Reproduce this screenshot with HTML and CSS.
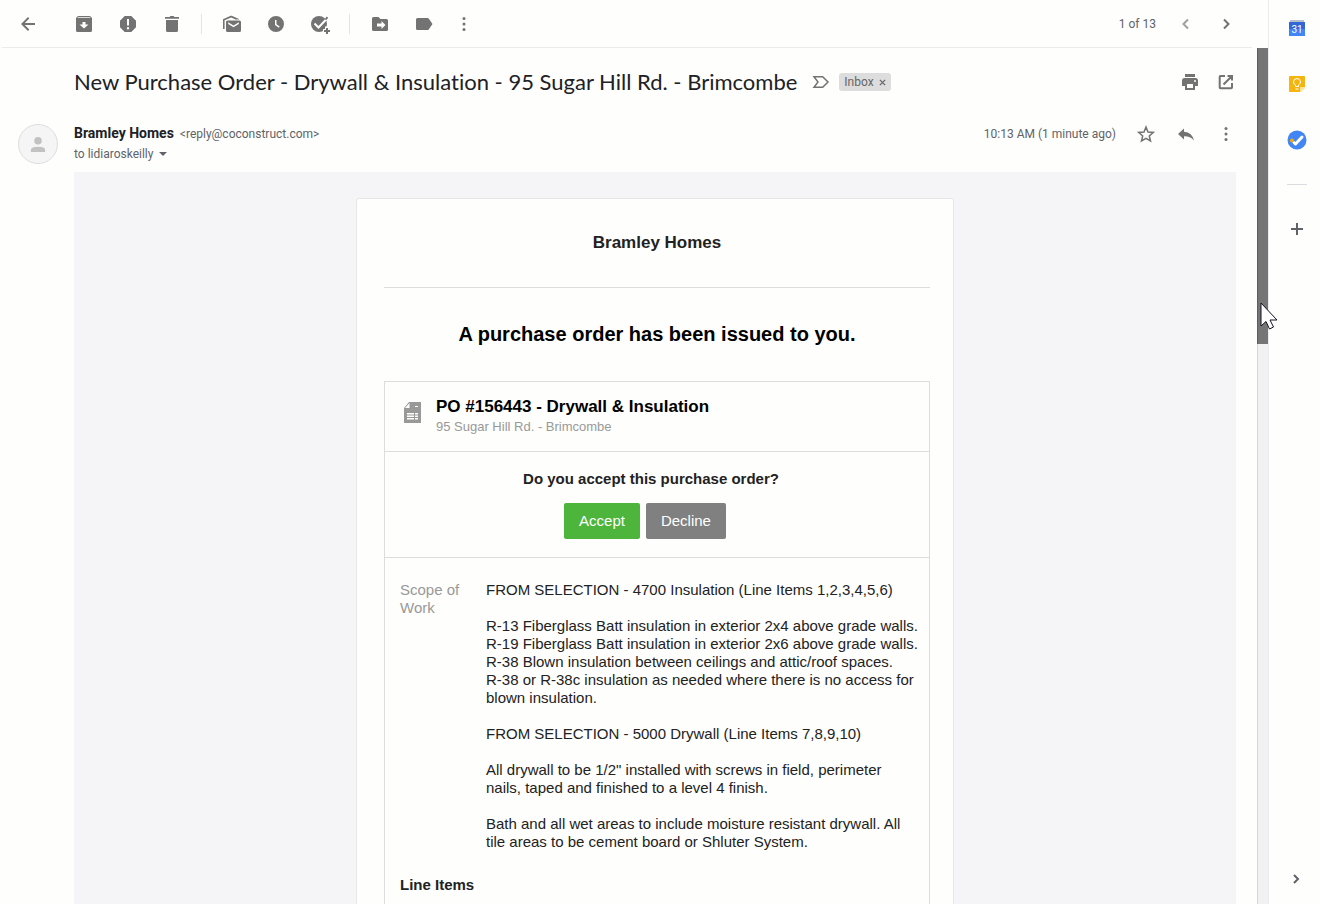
FILE: index.html
```html
<!DOCTYPE html>
<html lang="en">

<head>
    <meta charset="UTF-8">
    <meta name="viewport" content="width=device-width, initial-scale=1.0">
    <title>New Purchase Order - Drywall &amp; Insulation</title>
    <link rel="stylesheet" href="styles.css">
</head>

<body>
    <main class="mail">
        <div class="toolbar">
            <button class="icon-btn back" aria-label="Back to Inbox">
                <svg viewBox="0 0 20 20"><path d="M17 9H6.800l4.500-4.600L10 3l-7 7 7 7 1.300-1.400L6.800 11H17z"/></svg>
            </button>
            <div class="group">
                <button class="icon-btn" aria-label="Archive">
                    <svg viewBox="0 0 20 20"><path fill-rule="evenodd" d="M4 2h12l2 2v12.500q0 1.500-1.500 1.500h-13Q2 18 2 16.500V4zM4 3.200 3.500 4h13l-.5-.8zM8.500 8v2.500H5.500L10 14.500l4.500-4H11.500V8z"/></svg>
                </button>
                <button class="icon-btn" aria-label="Report spam">
                    <svg viewBox="0 0 20 20"><path fill-rule="evenodd" d="M6.700 2h6.600L18 6.700v6.600L13.300 18H6.700L2 13.300V6.700zM9 5v6.500h2V5zM10 13a1.200 1.200 0 1 0 0 2.400 1.200 1.200 0 0 0 0-2.400z"/></svg>
                </button>
                <button class="icon-btn" aria-label="Delete">
                    <svg viewBox="0 0 20 20"><path d="M4 6h12v10.500q0 1.500-1.500 1.500h-9Q4 18 4 16.500zM3 3h4.500l1-1h3l1 1H17v1.700H3z"/></svg>
                </button>
            </div>
            <div class="group">
                <button class="icon-btn" aria-label="Mark as unread">
                    <svg viewBox="0 0 20 20"><path fill-rule="evenodd" d="M5.500 6.500h12q1.500 0 1.500 1.500v8.500q0 1.500-1.500 1.500h-12Q4 18 4 16.500V8Q4 6.500 5.500 6.500zM6.200 8.300v1.600l5.300 3.300 5.300-3.300V8.300l-5.300 3.300z"/><path d="M1 15V5.200L8.700 1.800h1L17 5v.5h-3.500L9.200 3.400 2.600 6.300V15z"/></svg>
                </button>
                <button class="icon-btn" aria-label="Snooze">
                    <svg viewBox="0 0 20 20"><path fill-rule="evenodd" d="M10 2a8 8 0 1 0 0 16 8 8 0 0 0 0-16zM9 6h1.500v4.200l3.200 2.300-.9 1.200L9 11z"/></svg>
                </button>
                <button class="icon-btn" aria-label="Add to Tasks">
                    <svg viewBox="0 0 20 20"><circle cx="9" cy="10" r="8"/><path class="cut" d="m4.500 9.500 4 4L18.500 3"/><path d="m16.800 2.500 1.400 1.200-2 2.500-1.400-1.300z"/><path class="halo" d="M17 12.500v8M13 17h8"/><path class="line" d="M17 14v6M14 17h6"/></svg>
                </button>
            </div>
            <div class="group last">
                <button class="icon-btn" aria-label="Move to">
                    <svg viewBox="0 0 20 20"><path fill-rule="evenodd" d="M3.500 3h5l2 2h6Q18 5 18 6.500v9q0 1.500-1.500 1.500h-13Q2 17 2 15.500v-11Q2 3 3.500 3zM7 9.500v3h4.500V15l4-4-4-4v2.500z"/></svg>
                </button>
                <button class="icon-btn" aria-label="Labels">
                    <svg viewBox="0 0 20 20"><path d="M3.500 4h10q.8 0 1.200.6L18.500 10l-3.800 5.400q-.4.6-1.200.6h-10Q2 16 2 14.500v-9Q2 4 3.500 4z"/></svg>
                </button>
                <button class="icon-btn" aria-label="More">
                    <svg viewBox="0 0 20 20"><circle cx="10" cy="4.500" r="1.500"/><circle cx="10" cy="10" r="1.500"/><circle cx="10" cy="15.500" r="1.500"/></svg>
                </button>
            </div>
            <div class="pager">
                <span class="count">1 of 13</span>
                <button class="icon-btn faded" aria-label="Newer">
                    <svg viewBox="0 0 20 20"><path class="line" d="M12 5.500 7.500 10l4.500 4.500"/></svg>
                </button>
                <button class="icon-btn" aria-label="Older">
                    <svg viewBox="0 0 20 20"><path class="line" d="m8 5.500 4.500 4.500L8 14.500"/></svg>
                </button>
            </div>
        </div>

        <div class="scroll-area">
            <div class="thread">
                <div class="subject">
                    <h2>New Purchase Order - Drywall &amp; Insulation - 95 Sugar Hill Rd. - Brimcombe</h2>
                    <button class="icon-btn important" aria-label="Mark as important">
                        <svg viewBox="0 0 20 20"><path class="outline" d="M3 4.700h8.700l5.300 5.300-5.300 5.300H3L7 10z"/></svg>
                    </button>
                    <span class="label">Inbox <button aria-label="Remove label Inbox"><svg viewBox="0 0 8 8"><path class="outline" d="m1 1 6 6M7 1 1 7"/></svg></button></span>
                    <div class="actions">
                        <button class="icon-btn" aria-label="Print all">
                            <svg viewBox="0 0 20 20"><path d="M5 2h10v3H5z"/><path fill-rule="evenodd" d="M4.500 6h11Q18 6 18 8.500V14h-3v4H5v-4H2V8.500Q2 6 4.500 6zM7 12v4h6v-4zM15 8a1 1 0 1 0 0 2 1 1 0 0 0 0-2z"/></svg>
                        </button>
                        <button class="icon-btn" aria-label="In new window">
                            <svg viewBox="0 0 20 20"><path class="line" d="M9 4H4.500q-.8 0-.8.8v10.700q0 .8.8.8h10.700q.8 0 .8-.8V11M11.500 4H16v4.500M16 4l-8.500 8.500"/></svg>
                        </button>
                    </div>
                </div>

                <div class="message">
                    <div class="avatar">
                        <svg viewBox="0 0 40 40"><circle cx="20" cy="16.500" r="4"/><path d="M12.500 28.500v-2q0-3.500 7.500-3.500t7.500 3.500v2z"/></svg>
                    </div>
                    <div class="message-main">
                        <div class="message-head">
                            <div class="from">
                                <div class="sender"><strong>Bramley Homes</strong> <span>&lt;reply@coconstruct.com&gt;</span></div>
                                <div class="to">to lidiaroskeilly <button aria-label="Show details"><svg viewBox="0 0 8 4"><path d="M0 0h8L4 4z"/></svg></button></div>
                            </div>
                            <div class="meta">
                                <span class="date">10:13 AM (1 minute ago)</span>
                                <button class="icon-btn" aria-label="Star">
                                    <svg viewBox="0 0 20 20"><path class="outline" d="m10 3 2 5 5.300.4-4 3.500 1.200 5.100L10 14.300 5.500 17l1.200-5.100-4-3.500L8 8z"/></svg>
                                </button>
                                <button class="icon-btn" aria-label="Reply">
                                    <svg viewBox="0 0 20 20"><path d="M8 4.500 2 10l6 5.500v-3.200q6-.3 10 4.200-1.700-8-10-8.800z"/></svg>
                                </button>
                                <button class="icon-btn" aria-label="More">
                                    <svg viewBox="0 0 20 20"><circle cx="10" cy="4.500" r="1.500"/><circle cx="10" cy="10" r="1.500"/><circle cx="10" cy="15.500" r="1.500"/></svg>
                                </button>
                            </div>
                        </div>

                        <div class="email">
                            <div class="card">
                                <div class="company">Bramley Homes</div>
                                <h1>A purchase order has been issued to you.</h1>
                                <div class="order">
                                    <div class="order-head">
                                        <svg class="doc" viewBox="0 0 17 21"><path fill-rule="evenodd" d="M5 0h12v21H0V6zM5.500 1 1 6h4.500zM11 4v1h3V4zM3 11v1.500h7V11zM11 11v1.500h3V11zM3 13.500V15h7v-1.500zM11 13.500V15h3v-1.500zM3 16v1.500h7V16zM11 16v1.500h3V16z"/></svg>
                                        <div>
                                            <h3>PO #156443 - Drywall &amp; Insulation</h3>
                                            <div class="job">95 Sugar Hill Rd. - Brimcombe</div>
                                        </div>
                                    </div>
                                    <div class="decision">
                                        <div class="question">Do you accept this purchase order?</div>
                                        <div class="choices">
                                            <button class="accept">Accept</button>
                                            <button class="decline">Decline</button>
                                        </div>
                                    </div>
                                    <div class="details">
                                        <div class="scope">
                                            <div class="scope-label">Scope of Work</div>
                                            <div class="scope-text">
                                                <p>FROM SELECTION - 4700 Insulation (Line Items 1,2,3,4,5,6)</p>
                                                <p>R-13 Fiberglass Batt insulation in exterior 2x4 above grade walls.<br>
                                                    R-19 Fiberglass Batt insulation in exterior 2x6 above grade walls.<br>
                                                    R-38 Blown insulation between ceilings and attic/roof spaces.<br>
                                                    R-38 or R-38c insulation as needed where there is no access for blown insulation.</p>
                                                <p>FROM SELECTION - 5000 Drywall (Line Items 7,8,9,10)</p>
                                                <p>All drywall to be 1/2" installed with screws in field, perimeter nails, taped and finished to a level 4 finish.</p>
                                                <p>Bath and all wet areas to include moisture resistant drywall. All tile areas to be cement board or Shluter System.</p>
                                            </div>
                                        </div>
                                        <h4>Line Items</h4>
                                    </div>
                                </div>
                            </div>
                        </div>
                    </div>
                </div>
            </div>
            <div class="scrollbar">
                <div class="thumb"></div>
                <svg class="pointer" viewBox="0 0 20 28"><path d="M1 1v23l5-4.500 3.500 7.500 4-2-3.500-7h7z"/></svg>
            </div>
        </div>
    </main>

    <aside class="side-panel">
        <button class="app" aria-label="Calendar">
            <svg viewBox="0 0 20 20"><path fill="#b9bfca" d="M3 2h14v3H3z"/><path fill="#3367d6" d="M2 4h16v14H2z"/><path fill="#4285f4" d="M2 11h16v7H2z"/><text x="10" y="15">31</text></svg>
        </button>
        <button class="app" aria-label="Keep">
            <svg viewBox="0 0 20 20"><path fill="#f5b50f" d="M3 2h14q1 0 1 1v10l-5 5H3q-1 0-1-1V3q0-1 1-1z"/><path fill="#fde293" d="M18 13v1l-4 4h-1v-5z"/><path fill="none" stroke="#fff" d="M8.500 12.500v-1.500q-2-1-2-3a3.500 3.500 0 0 1 7 0q0 2-2 3v1.500zM8.500 15h3"/></svg>
        </button>
        <button class="app" aria-label="Tasks">
            <svg viewBox="0 0 20 20"><circle cx="10" cy="10" r="9.500" fill="#4285f4"/><path fill="none" stroke="#fff" stroke-width="3" stroke-linecap="round" stroke-linejoin="round" d="m7 12.500 1.500 1.500 6.500-7"/><circle cx="5" cy="10.500" r="2" fill="#f9ab00"/></svg>
        </button>
        <hr>
        <button class="app add" aria-label="Get add-ons">
            <svg viewBox="0 0 20 20"><path class="line" d="M10 4v12M4 10h12"/></svg>
        </button>
        <button class="app hide" aria-label="Hide side panel">
            <svg viewBox="0 0 20 20"><path class="line" d="m7 6 4 4-4 4"/></svg>
        </button>
    </aside>
</body>

</html>
```
FILE: styles.css
```css
* {
    box-sizing: border-box;
}

body {
    margin: 0;
    height: 100vh;
    display: flex;
    overflow: hidden;
    background: #fefefd;
    color: #202124;
    font-family: Roboto, "Liberation Sans", sans-serif;
    font-size: 12px;
}

h1, h2, h3, h4, p {
    margin: 0;
}

button {
    padding: 0;
    border: none;
    background: none;
    color: inherit;
    font-family: inherit;
    cursor: pointer;
}

svg {
    display: block;
    fill: currentColor;
    overflow: visible;
}

.line {
    fill: none;
    stroke: currentColor;
    stroke-width: 2;
}

.outline {
    fill: none;
    stroke: currentColor;
    stroke-width: 1.5;
}

.cut {
    fill: none;
    stroke: #fefefd;
    stroke-width: 2;
}

.halo {
    fill: none;
    stroke: #fefefd;
    stroke-width: 4;
}

.icon-btn {
    flex: none;
    color: #737373;
}

.icon-btn svg {
    width: 20px;
    height: 20px;
}

.faded {
    color: #a0a0a0;
}

.mail {
    flex: 1;
    min-width: 0;
    display: flex;
    flex-direction: column;
}

/* toolbar */
.toolbar {
    height: 48px;
    flex: none;
    display: flex;
    align-items: center;
    margin: 0 16px 0 2px;
    padding: 0 16px;
    border-bottom: 1px solid #ebebeb;
}

.back {
    margin-right: 36px;
}

.group {
    display: flex;
    gap: 24px;
    height: 20px;
}

.group + .group {
    margin-left: 19px;
    padding-left: 20px;
    border-left: 1px solid #e4e4e4;
}

.last .icon-btn:last-child {
    margin-left: -4px;
}

.pager {
    display: flex;
    align-items: center;
    gap: 20px;
    margin-left: auto;
    color: #5f6368;
}

/* message */
.scroll-area {
    flex: 1;
    min-height: 0;
    display: flex;
}

.thread {
    flex: 1;
    min-width: 0;
    overflow: hidden;
    padding: 16px 21px 0 18px;
}

.subject {
    display: flex;
    align-items: center;
    height: 36px;
    padding-left: 56px;
}

.subject h2 {
    padding-bottom: 2px;
    font-family: Lato, Roboto, sans-serif;
    font-size: 22px;
    font-weight: 400;
    font-variant-ligatures: none;
    white-space: nowrap;
}

.important {
    margin: 0 8px 0 14px;
}

.label {
    display: flex;
    align-items: center;
    gap: 5px;
    height: 18px;
    padding: 0 5px;
    border-radius: 3px;
    background: #dddddd;
    color: #666666;
}

.label svg {
    width: 7px;
    height: 7px;
}

.actions {
    display: flex;
    gap: 16px;
    margin-left: auto;
}

.message {
    display: flex;
    gap: 16px;
    padding-top: 20px;
}

.avatar {
    flex: none;
    width: 40px;
    height: 40px;
    margin-top: 4px;
    border: 1px solid #dedede;
    border-radius: 50%;
    background: #f5f5f5;
    color: #c2c2c2;
}

.message-main {
    flex: 1;
    min-width: 0;
}

.message-head {
    display: flex;
    justify-content: space-between;
    height: 52px;
    color: #5f6368;
}

.from {
    line-height: 20px;
    padding-top: 3px;
}

.sender {
    display: flex;
    align-items: baseline;
    gap: 6px;
}

.from strong {
    font-size: 14px;
    color: #202124;
}

.to {
    display: flex;
    align-items: center;
    gap: 6px;
}

.to svg {
    width: 8px;
    height: 4px;
}

.meta {
    display: flex;
    align-items: center;
    gap: 20px;
    height: 28px;
}

/* email body */
.email {
    padding: 26px 0 0;
    background: #f5f5f7;
    font-family: "Liberation Sans", Arial, sans-serif;
    font-size: 15px;
    line-height: 18px;
    color: #222222;
}

.card {
    max-width: 598px;
    margin: 0 auto;
    padding: 0 23px 0 27px;
    border: 1px solid #e6e6e6;
    border-radius: 3px;
    background: #fefefd;
}

.company {
    padding: 35px 0;
    border-bottom: 1px solid #dddddd;
    font-size: 17px;
    font-weight: bold;
    text-align: center;
}

.card h1 {
    padding: 34px 0 35px;
    font-size: 20px;
    line-height: 24px;
    color: #000000;
    text-align: center;
}

.order {
    border: 1px solid #dddddd;
}

.order-head {
    display: flex;
    gap: 15px;
    height: 70px;
    padding: 14px 19px;
    border-bottom: 1px solid #dddddd;
}

.doc {
    width: 17px;
    height: 21px;
    margin-top: 6px;
    color: #999999;
}

.order-head h3 {
    font-size: 17px;
    line-height: 22px;
    color: #000000;
}

.job {
    font-size: 13px;
    color: #999999;
}

.decision {
    padding: 18px 12px 18px 0;
    border-bottom: 1px solid #dddddd;
    text-align: center;
}

.question {
    font-weight: bold;
}

.choices {
    display: flex;
    justify-content: center;
    gap: 6px;
    margin-top: 15px;
    padding-right: 12px;
}

.choices button {
    height: 36px;
    padding: 0 15px 2px;
    border-radius: 2px;
    color: #ffffff;
    font-size: 15px;
}

.choices .accept {
    background: #4db53c;
}

.choices .decline {
    background: #808080;
}

.details {
    padding: 23px 10px 60px 15px;
}

.scope {
    display: flex;
}

.scope-label {
    flex: none;
    width: 86px;
    padding-right: 20px;
    color: #999999;
}

.scope-text p {
    margin-bottom: 18px;
}

.details h4 {
    margin-top: 7px;
    font-size: 15px;
}

/* scrollbar */
.scrollbar {
    position: relative;
    flex: none;
    width: 11px;
    border-left: 1px solid #d4d4d4;
    background: #f1f1f1;
}

.thumb {
    height: 296px;
    margin-left: -1px;
    border-left: 1px solid #5c5c5c;
    background: #757575;
}

.pointer {
    position: absolute;
    left: 2px;
    top: 254px;
    width: 20px;
    height: 28px;
    fill: #ffffff;
    stroke: #111122;
    stroke-width: 1;
}

/* side panel */
.side-panel {
    flex: none;
    width: 52px;
    display: flex;
    flex-direction: column;
    align-items: center;
    padding: 18px 0 15px 4px;
    border-left: 1px solid #ececf0;
}

.app {
    margin-bottom: 36px;
    color: #5f6368;
}

.app svg {
    width: 20px;
    height: 20px;
}

.app text {
    fill: #ffffff;
    font-size: 10px;
    text-anchor: middle;
}

.side-panel hr {
    width: 20px;
    margin: -2px 0 34px;
    border: none;
    border-top: 1px solid #dadce0;
}

.hide {
    margin: auto 0 0;
}
```
